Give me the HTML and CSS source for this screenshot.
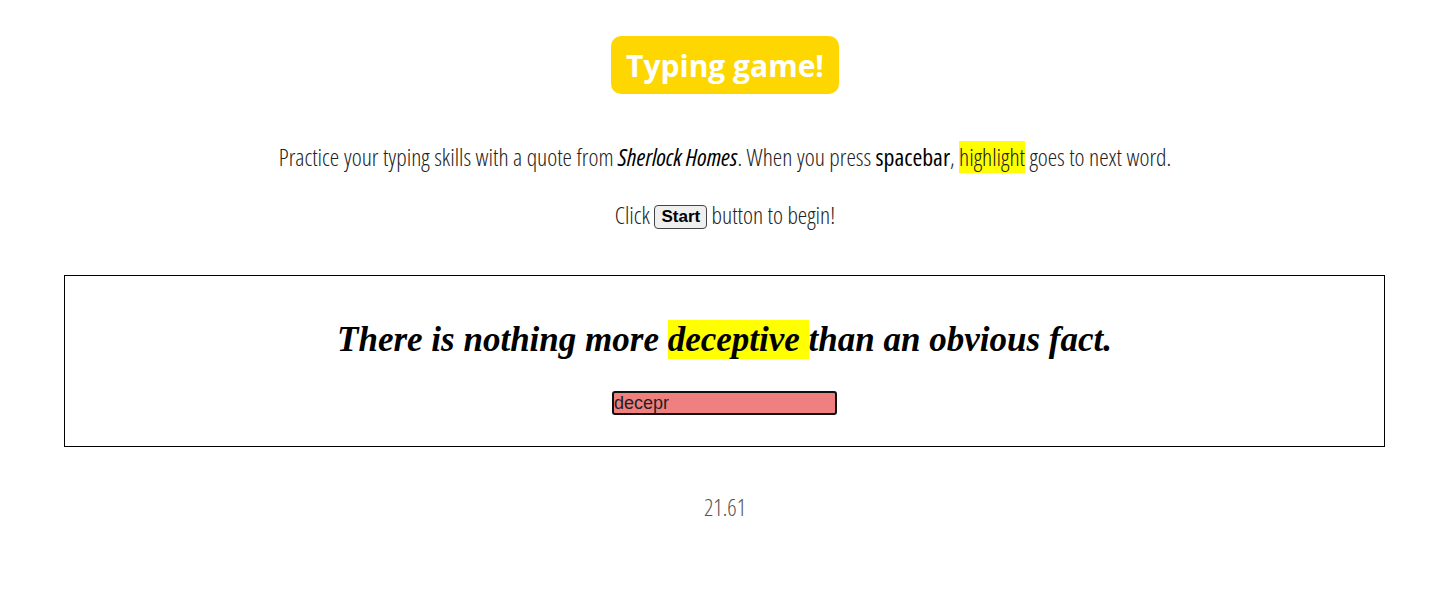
FILE: index.html
```html
<!DOCTYPE html>
<html>
<head>
<meta charset="utf-8">
<link rel="stylesheet" href="styles.css">
</head>
<body>
<header class="top">
  <h1 class="title">Typing game!</h1>
</header>
<p class="intro">Practice your typing skills with a quote from <strong><em>Sherlock Homes</em></strong>. When you press <strong>spacebar</strong>, <span class="hl">highlight</span> goes to next word.</p>
<p class="intro">Click <button class="start" type="button">Start</button> button to begin!</p>
<section class="game">
  <p class="quote">There is nothing more <span class="hl">deceptive </span>than an obvious fact.</p>
  <div class="field"><input class="typed" type="text" value="decepr"></div>
</section>
<p class="timer">21.61</p>
</body>
</html>
```
FILE: styles.css
```css
html, body { margin: 0; padding: 0; background: #fff; }
body {
  font-family: "Open Sans", sans-serif;
  font-weight: 300;
  font-stretch: condensed;
  color: #222;
  text-align: center;
}
.top { display: flex; justify-content: center; padding-top: 36px; }
.title {
  margin: 0;
  background: #FFD700;
  color: #fff;
  font-family: "Open Sans", sans-serif;
  font-stretch: normal;
  font-weight: 700;
  font-size: 30px;
  line-height: 60px;
  height: 58px;
  padding: 0 15px;
  border-radius: 10px;
}
.intro { font-size: 23.8px; margin: 0; line-height: 34px; }
.intro:first-of-type { margin-top: 46px; }
.intro + .intro { margin-top: 24px; }
.intro strong { font-weight: 500; color: #000; }
.hl { background: #FFFF00; }
.start {
  font-family: "Liberation Sans", Arial, sans-serif;
  font-weight: 700;
  font-size: 17px;
  font-stretch: normal;
  height: 24px;
  padding: 0 6px;
  border: 1px solid #444;
  border-radius: 4px;
  background: #efefef;
  color: #000;
  vertical-align: 2px;
}
.game {
  margin: 43px 65px 0 64px;
  border: 1px solid #000;
  padding: 42px 0 31px;
}
.quote {
  margin: 0;
  font-family: "Liberation Serif", serif;
  font-style: italic;
  font-weight: 700;
  font-size: 35px;
  font-stretch: normal;
  line-height: 44px;
  color: #000;
}
.field { display: flex; justify-content: center; margin-top: 29px; }
.typed {
  width: 225px;
  height: 24px;
  box-sizing: border-box;
  background: #F08080;
  border: 2px solid #111;
  border-radius: 3px;
  font-family: "Liberation Sans", Arial, sans-serif;
  font-size: 18px;
  padding: 0;
  color: #222;
}
.timer { margin: 44px 0 0; font-size: 23px; color: #555; }
```
